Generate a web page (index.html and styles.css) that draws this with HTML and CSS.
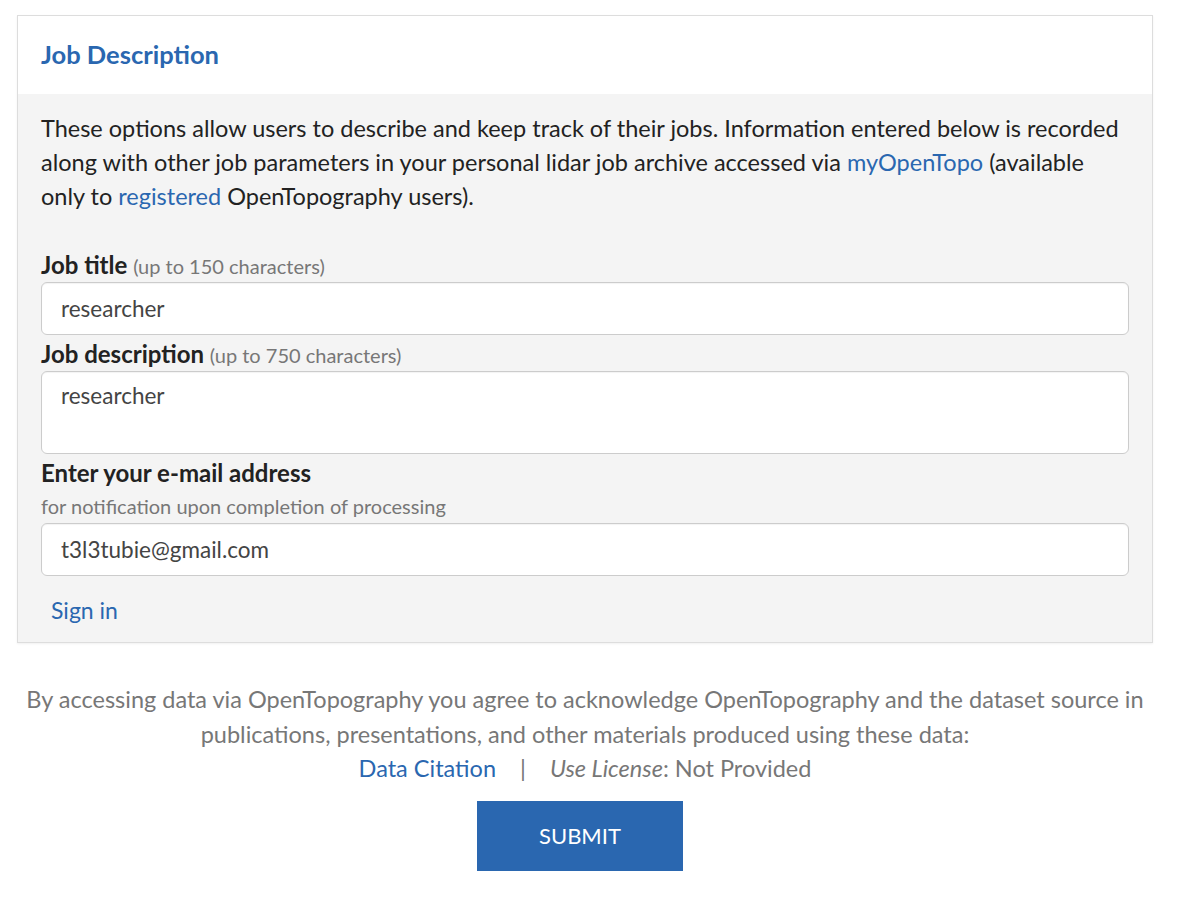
FILE: index.html
```html
<!DOCTYPE html>
<html lang="en">
<head>
<meta charset="utf-8">
<title>Job Description</title>
<link rel="stylesheet" href="styles.css">
</head>
<body>
<div class="page">
  <section class="card">
    <div class="card-header">
      <h2 class="card-title">Job Description</h2>
    </div>
    <div class="card-body">
      <p class="intro">These options allow users to describe and keep track of their jobs. Information entered below is recorded along with other job parameters in your personal lidar job archive accessed via <a href="#">myOpenTopo</a> (available only to <a href="#">registered</a> OpenTopography users).</p>
      <label class="label" for="title">Job title <span class="hint">(up to 150 characters)</span></label>
      <input class="field" id="title" type="text" value="researcher">
      <label class="label" for="desc">Job description <span class="hint">(up to 750 characters)</span></label>
      <textarea class="field area" id="desc">researcher</textarea>
      <label class="label" for="email">Enter your e-mail address</label>
      <div class="sub">for notification upon completion of processing</div>
      <input class="field" id="email" type="text" value="t3l3tubie@gmail.com">
      <a class="signin" href="#">Sign in</a>
    </div>
  </section>
  <div class="footer">
    <p class="terms">By accessing data via OpenTopography you agree to acknowledge OpenTopography and the dataset source in publications, presentations, and other materials produced using these data:<br><a href="#">Data Citation</a><span class="sep">|</span><em>Use License</em>: Not Provided</p>
    <button class="submit" type="button">SUBMIT</button>
  </div>
</div>
</body>
</html>
```

FILE: styles.css
```css
* { box-sizing: border-box; }
html, body { margin: 0; padding: 0; background: #fff; }
body {
  font-family: Lato, "Open Sans", "Liberation Sans", sans-serif;
  font-size: 23.5px;
  color: #222;
}
a { color: #2a67b0; text-decoration: none; }
.page { padding: 15px 27px 40px 17px; }
.card {
  border: 1px solid #ddd;
  box-shadow: 0 1px 2px rgba(0,0,0,0.06);
}
.card-header {
  background: #fff;
  height: 78px;
  padding: 0 23px;
  display: flex;
  align-items: center;
}
.card-title {
  margin: 0;
  font-size: 25.5px;
  font-weight: 700;
  color: #2a67b0;
  line-height: 1;
}
.card-body {
  background: #f4f4f4;
  padding: 17px 23px 15px 23px;
  display: flex;
  flex-direction: column;
}
.intro {
  margin: 0 0 35px 0;
  line-height: 34px;
}
.label {
  font-weight: 700;
  font-size: 24px;
  line-height: 34px;
  height: 34px;
  display: block;
}
.hint {
  font-weight: 400;
  font-size: 20px;
  line-height: 1;
  color: #777;
}
.sub {
  font-size: 20px;
  color: #777;
  line-height: 33px;
}
.field {
  display: block;
  width: 100%;
  height: 53px;
  border: 1px solid #ccc;
  border-radius: 6px;
  background: #fff;
  font-family: inherit;
  font-size: 22.5px;
  color: #444;
  padding: 0 19px;
  margin: 0 0 2px 0;
  box-shadow: inset 0 1px 1px rgba(0,0,0,0.05);
  outline: none;
}
.area {
  height: 83px;
  padding-top: 7px;
  resize: none;
  line-height: 34px;
  overflow: hidden;
}
.signin {
  align-self: flex-start;
  margin: 15px 0 0 10px;
  line-height: 34px;
  font-size: 23px;
}
.footer {
  text-align: center;
  padding-top: 39px;
}
.terms {
  margin: 0;
  color: #777;
  line-height: 34.5px;
}
.sep { margin: 0 24px; color: #777; }
.terms em { font-style: italic; }
.submit {
  margin: 15px 10px 0 0;
  width: 206px;
  height: 70px;
  background: #2a67b0;
  color: #fff;
  border: none;
  font-family: inherit;
  font-size: 22px;
  letter-spacing: 0;
}
```
